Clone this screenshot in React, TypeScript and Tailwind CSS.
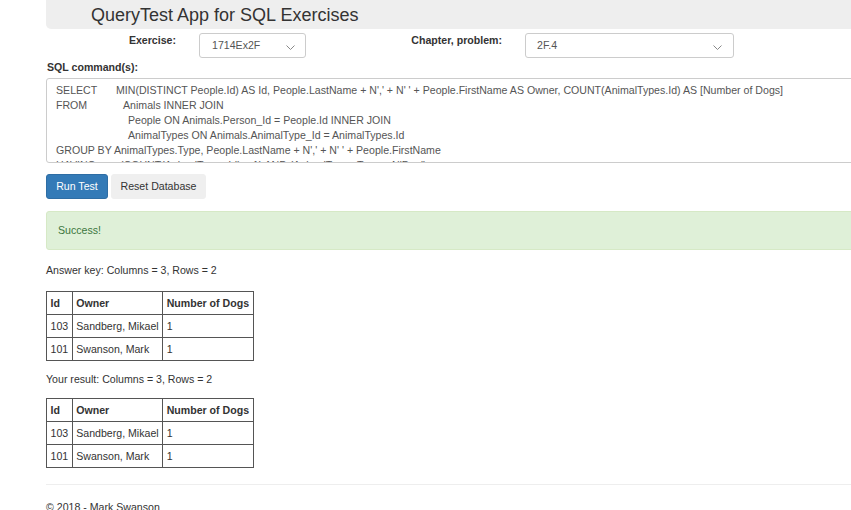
export default function App() {
  const rows = [
    { id: "103", owner: "Sandberg, Mikael", dogs: "1" },
    { id: "101", owner: "Swanson, Mark", dogs: "1" }
  ];

  const Chevron = () => (
    <svg width="9" height="5" viewBox="0 0 9 5" className="mt-[3px]">
      <polyline points="0.5,0.5 4.5,4.5 8.5,0.5" fill="none" stroke="#888" strokeWidth="1" />
    </svg>
  );

  const ResultTable = () => (
    <table className="border-collapse border border-[#555] whitespace-nowrap">
      <thead>
        <tr className="h-[23px]">
          <th className="border border-[#555] px-[3.5px] py-0 text-left font-bold">Id</th>
          <th className="border border-[#555] px-[3.5px] py-0 text-left font-bold">Owner</th>
          <th className="border border-[#555] px-[3.5px] py-0 text-left font-bold">Number of Dogs</th>
        </tr>
      </thead>
      <tbody>
        {rows.map((r) => (
          <tr key={r.id} className="h-[23px]">
            <td className="border border-[#555] px-[3.5px] py-0">{r.id}</td>
            <td className="border border-[#555] px-[3.5px] py-0">{r.owner}</td>
            <td className="border border-[#555] px-[3.5px] py-0">{r.dogs}</td>
          </tr>
        ))}
      </tbody>
    </table>
  );

  return (
    <div className="w-[851px] h-[510px] overflow-hidden bg-white font-['Liberation_Sans',Arial,sans-serif] text-[10.6px] leading-[15px] text-[#333]">
      <div className="pl-[46px] w-[920px]">
        {/* page heading */}
        <div className="h-[29px] bg-[#eee] rounded-b-[5px] pl-[45px] pt-[6px]">
          <h1 className="text-[18px] leading-[18px] font-normal">QueryTest App for SQL Exercises</h1>
        </div>

        {/* exercise pickers */}
        <div className="flex items-start mt-[4px]">
          <div className="w-[130px] text-right font-bold">Exercise:</div>
          <div className="ml-[23px] w-[107px] h-[25px] border border-[#ccc] rounded-[3px] pl-[12px] pr-[10px] flex items-center justify-between text-[#555]">
            <span>1714Ex2F</span>
            <Chevron />
          </div>
          <div className="w-[196px] text-right font-bold">Chapter, problem:</div>
          <div className="ml-[23px] w-[209px] h-[25px] border border-[#ccc] rounded-[3px] pl-[11px] pr-[11px] flex items-center justify-between text-[#555]">
            <span>2F.4</span>
            <Chevron />
          </div>
        </div>

        <div className="mt-[2px] pl-px font-bold">SQL command(s):</div>

        {/* query box */}
        <div className="mt-[3px] h-[85px] border border-[#ccc] rounded-[3px] overflow-hidden pl-[9px] pt-[4px] text-[#555] whitespace-pre">
          <div className="flex">
            <span className="w-[60px]">SELECT</span>
            <span>MIN(DISTINCT People.Id) AS Id, People.LastName + N',' + N' ' + People.FirstName AS Owner, COUNT(AnimalTypes.Id) AS [Number of Dogs]</span>
          </div>
          <div className="flex">
            <span className="w-[67px]">FROM</span>
            <span>Animals INNER JOIN</span>
          </div>
          <div className="pl-[72px]">People ON Animals.Person_Id = People.Id INNER JOIN</div>
          <div className="pl-[72px]">AnimalTypes ON Animals.AnimalType_Id = AnimalTypes.Id</div>
          <div>GROUP BY AnimalTypes.Type, People.LastName + N',' + N' ' + People.FirstName</div>
          <div className="flex">
            <span className="w-[64px]">HAVING</span>
            <span>(COUNT(AnimalTypes.Id) &gt; 1) AND (AnimalTypes.Type = N'Dog')</span>
          </div>
        </div>

        <div className="flex gap-[3px] mt-[11px]">
          <button className="h-[25px] w-[62px] bg-[#337ab7] border border-[#2e6da4] rounded-[3px] text-white">Run Test</button>
          <button className="h-[25px] w-[95px] bg-[#efefef] border border-[#efefef] rounded-[3px] text-[#333]">Reset Database</button>
        </div>

        <div className="mt-[12px] h-[39px] bg-[#dff0d8] border border-[#d6e9c6] rounded-[3px] pl-[11px] flex items-center text-[#3c763d]">
          Success!
        </div>

        <div className="mt-[13px]">Answer key: Columns = 3, Rows = 2</div>
        <div className="mt-[13px]">
          <ResultTable />
        </div>

        <div className="mt-[11px]">Your result: Columns = 3, Rows = 2</div>
        <div className="mt-[11px]">
          <ResultTable />
        </div>

        <hr className="mt-[16px] border-0 border-t border-[#eee]" />
        <footer className="mt-[15px]">© 2018 - Mark Swanson</footer>
      </div>
    </div>
  );
}
